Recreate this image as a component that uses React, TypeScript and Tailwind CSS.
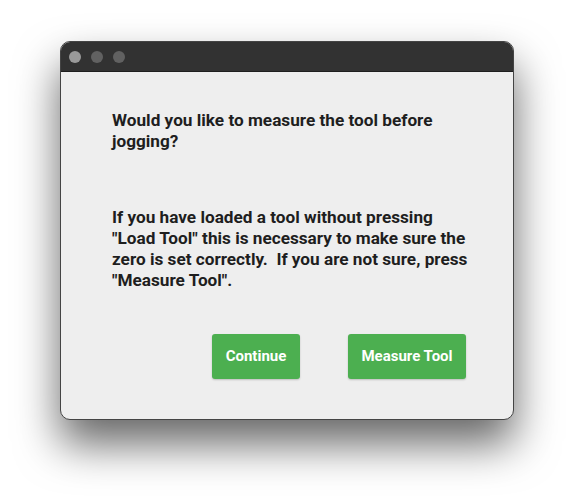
export default function App() {
  return (
    <div className="w-[575px] h-[500px] bg-white relative" style={{ fontFamily: "Roboto, 'Liberation Sans', sans-serif" }}>
      <div className="absolute left-[60px] top-[41px] w-[454px] h-[379px] rounded-[10px] border border-[#444] bg-[#eeeeee] overflow-hidden shadow-[0_24px_44px_rgba(0,0,0,0.6)] flex flex-col">
        <div className="h-[30px] bg-[#323232] border-b border-[#1e1e1e] flex items-center gap-[10px] pl-[8px] shrink-0">
          <div className="w-[12px] h-[12px] rounded-full bg-[#9a9a9a]" />
          <div className="w-[12px] h-[12px] rounded-full bg-[#616161]" />
          <div className="w-[12px] h-[12px] rounded-full bg-[#616161]" />
        </div>
        <div className="pl-[51px] pr-[38px] pt-[38px] text-[17.2px] leading-[21px] font-bold text-[#1e1e1e]">
          <p>Would you like to measure the tool before jogging?</p>
          <p className="mt-[55px]">
            If you have loaded a tool without pressing "Load Tool" this is necessary to make sure the zero is set correctly.&nbsp; If you are not sure, press "Measure Tool".
          </p>
        </div>
        <div className="flex gap-[48px] pl-[151px] mt-[43px]">
          <button className="h-[45px] w-[88px] rounded-[3px] bg-[#4caf50] text-white font-bold text-[15px] shadow-[0_1px_2px_rgba(0,0,0,0.2)]">Continue</button>
          <button className="h-[45px] w-[118px] rounded-[3px] bg-[#4caf50] text-white font-bold text-[15px] shadow-[0_1px_2px_rgba(0,0,0,0.2)]">Measure Tool</button>
        </div>
      </div>
    </div>
  );
}
